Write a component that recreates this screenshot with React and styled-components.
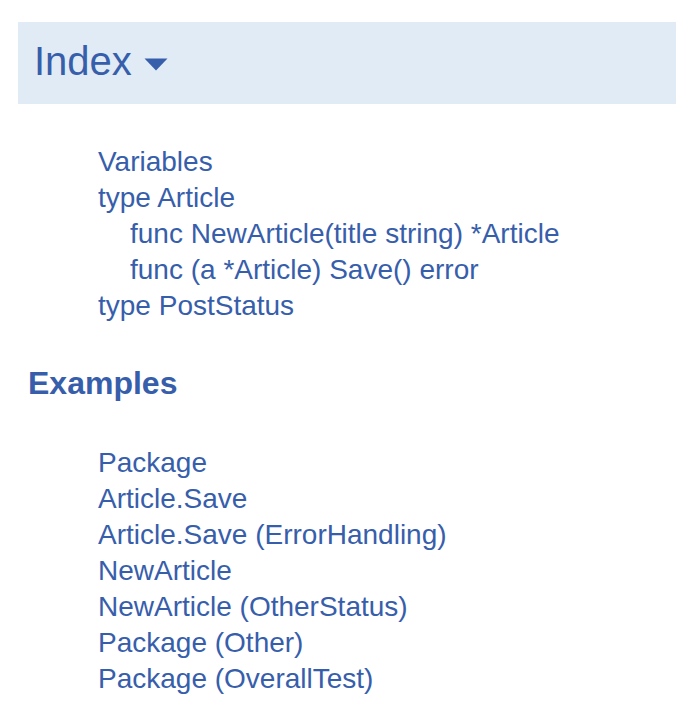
import React from "react";
import styled, { createGlobalStyle } from "styled-components";

const GlobalStyle = createGlobalStyle`
  html, body {
    margin: 0;
    padding: 0;
    background: #ffffff;
  }
  body {
    font-family: "Liberation Sans", Arial, Helvetica, sans-serif;
    color: #375eab;
  }
`;

const Page = styled.div`
  padding-top: 22px;
  padding-bottom: 20px;
`;

const IndexHeader = styled.div`
  margin-left: 18px;
  height: 82px;
  box-sizing: border-box;
  padding: 0 0 4px 16px;
  background: #e0ebf5;
  display: flex;
  align-items: center;
  gap: 12px;
`;

const Title = styled.h2`
  margin: 0;
  font-size: 40px;
  line-height: 46px;
  font-weight: normal;
  color: #375eab;
`;

const Caret = styled.svg`
  display: block;
  margin-top: 7px;
  flex: none;
`;

const IndexList = styled.div`
  margin-top: ${(p) => p.$top}px;
  padding-left: 98px;
  display: flex;
  flex-direction: column;
`;

const Item = styled.a`
  display: block;
  font-size: 28px;
  line-height: 36px;
  height: 36px;
  color: #375eab;
  text-decoration: none;
  white-space: nowrap;
  padding-left: ${(p) => (p.$sub ? 32 : 0)}px;
`;

const SectionHeading = styled.h3`
  margin: 41px 0 0 28px;
  font-size: 32px;
  line-height: 36px;
  font-weight: bold;
  color: #375eab;
`;

const indexItems = [
  { label: "Variables" },
  { label: "type Article" },
  { label: "func NewArticle(title string) *Article", sub: true },
  { label: "func (a *Article) Save() error", sub: true },
  { label: "type PostStatus" },
];

const exampleItems = [
  "Package",
  "Article.Save",
  "Article.Save (ErrorHandling)",
  "NewArticle",
  "NewArticle (OtherStatus)",
  "Package (Other)",
  "Package (OverallTest)",
];

export default function App() {
  return (
    <>
      <GlobalStyle />
      <Page>
        <IndexHeader>
          <Title>Index</Title>
          <Caret width="24" height="13" viewBox="0 0 24 13" aria-hidden="true">
            <polygon points="0.5,0.5 23.5,0.5 12,12.5" fill="#375eab" />
          </Caret>
        </IndexHeader>
        <IndexList $top={40}>
          {indexItems.map((it) => (
            <Item key={it.label} href="#" $sub={it.sub}>
              {it.label}
            </Item>
          ))}
        </IndexList>
        <SectionHeading>Examples</SectionHeading>
        <IndexList $top={44}>
          {exampleItems.map((label) => (
            <Item key={label} href="#">
              {label}
            </Item>
          ))}
        </IndexList>
      </Page>
    </>
  );
}
